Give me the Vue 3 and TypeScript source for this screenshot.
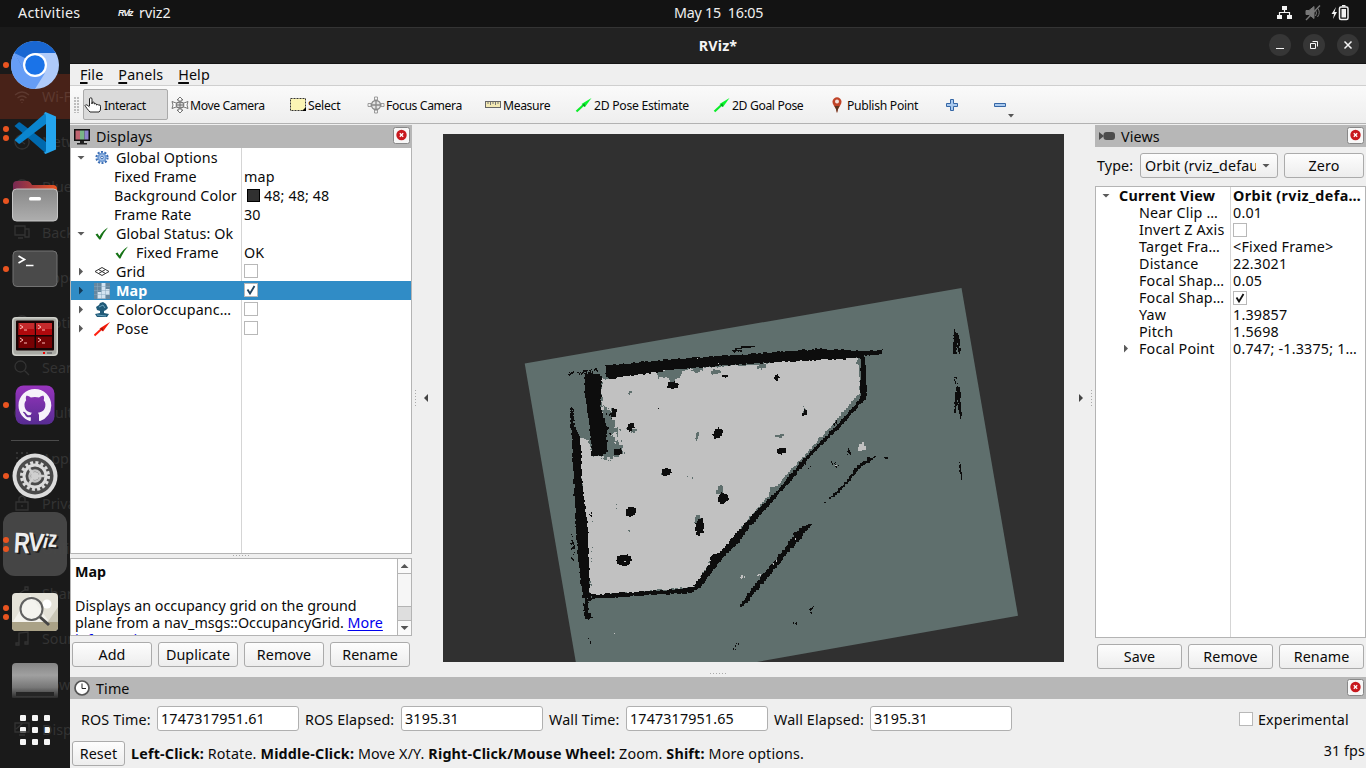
<script setup lang="ts">
type Pt = [number, number]

interface Row {
  name: string
  value?: string
  icon?: string
  arrow?: 'open' | 'closed'
  kind: 'top' | 'child' | 'state'
  check?: boolean
  swatch?: boolean
  selected?: boolean
}

const displays: Row[] = [
  { name: 'Global Options', icon: 'gear', arrow: 'open', kind: 'top' },
  { name: 'Fixed Frame', value: 'map', kind: 'child' },
  { name: 'Background Color', value: '48; 48; 48', swatch: true, kind: 'child' },
  { name: 'Frame Rate', value: '30', kind: 'child' },
  { name: 'Global Status: Ok', icon: 'ok', arrow: 'open', kind: 'top' },
  { name: 'Fixed Frame', value: 'OK', icon: 'ok', kind: 'state' },
  { name: 'Grid', icon: 'grid', arrow: 'closed', kind: 'top', check: false },
  { name: 'Map', icon: 'map', arrow: 'closed', kind: 'top', check: true, selected: true },
  { name: 'ColorOccupanc…', icon: 'tree', arrow: 'closed', kind: 'top', check: false },
  { name: 'Pose', icon: 'pose', arrow: 'closed', kind: 'top', check: false },
]

interface ViewRow { name: string; value?: string; check?: boolean; arrow?: 'open' | 'closed'; bold?: boolean }
const views: ViewRow[] = [
  { name: 'Current View', value: 'Orbit (rviz_defa…', arrow: 'open', bold: true },
  { name: 'Near Clip …', value: '0.01' },
  { name: 'Invert Z Axis', check: false },
  { name: 'Target Fra…', value: '<Fixed Frame>' },
  { name: 'Distance', value: '22.3021' },
  { name: 'Focal Shap…', value: '0.05' },
  { name: 'Focal Shap…', check: true },
  { name: 'Yaw', value: '1.39857' },
  { name: 'Pitch', value: '1.5698' },
  { name: 'Focal Point', value: '0.747; -1.3375; 1…', arrow: 'closed' },
]

const tools = [
  { id: 'interact', label: 'Interact' },
  { id: 'move', label: 'Move Camera' },
  { id: 'select', label: 'Select' },
  { id: 'focus', label: 'Focus Camera' },
  { id: 'measure', label: 'Measure' },
  { id: 'pose', label: '2D Pose Estimate' },
  { id: 'goal', label: '2D Goal Pose' },
  { id: 'point', label: 'Publish Point' },
]

const times = [
  { label: 'ROS Time:', value: '1747317951.61' },
  { label: 'ROS Elapsed:', value: '3195.31' },
  { label: 'Wall Time:', value: '1747317951.65' },
  { label: 'Wall Elapsed:', value: '3195.31' },
]

const ghosts = ['Wi-Fi', 'Network', 'Bluetooth', 'Background', 'Appearance', 'Notifications', 'Search', 'Multitasking',
  'Applications', 'Privacy', 'Online Accounts', 'Sharing', 'Sound', 'Power', 'Displays']

const dock = [
  { id: 'chromium', dots: 1 }, { id: 'code', dots: 2 }, { id: 'files', dots: 1 }, { id: 'terminal', dots: 1 },
  { id: 'terminator', dots: 0 }, { id: 'github', dots: 1 }, { id: 'settings', dots: 1 }, { id: 'rviz', dots: 2 },
  { id: 'viewer', dots: 2 }, { id: 'disk', dots: 0 },
]

// Occupancy grid outlines: edges are broken into small cell-sized steps with a seeded jitter.
let seed = 7
function rnd(): number {
  seed = (seed * 16807) % 2147483647
  return seed / 2147483647 - 0.5
}
function rough(pts: Pt[], amp = 1.6, step = 2): string {
  const out: string[] = []
  pts.forEach((p, i) => {
    const q = pts[(i + 1) % pts.length]
    const n = Math.max(1, Math.round(Math.hypot(q[0] - p[0], q[1] - p[1]) / step))
    for (let k = 0; k < n; k++) {
      const x = Math.round(p[0] + ((q[0] - p[0]) * k) / n + rnd() * amp)
      const y = Math.round(p[1] + ((q[1] - p[1]) * k) / n + rnd() * amp)
      out.push(out.length ? `H${x}V${y}` : `M${x} ${y}`)
    }
  })
  return out.join('') + 'Z'
}
function blob(cx: number, cy: number, rx: number, ry: number, amp = 2): string {
  const pts: Pt[] = []
  for (let a = 0; a < 10; a++) pts.push([cx + rx * Math.cos(a * 0.628), cy + ry * Math.sin(a * 0.628)])
  return rough(pts, amp)
}
function specks(x0: number, y0: number, x1: number, y1: number, n: number, spread: number): string {
  let d = ''
  for (let i = 0; i < n; i++) {
    const t = rnd() + 0.5
    const x = Math.round(x0 + (x1 - x0) * t + rnd() * spread)
    const y = Math.round(y0 + (y1 - y0) * t + rnd() * spread)
    d += `M${x} ${y}h${rnd() > 0 ? 2 : 1}v${rnd() > 0 ? 2 : 1}h-1z`
  }
  return d
}

const free = rough([[577, 438], [582, 438], [588, 441], [592, 456], [602, 456], [602, 378], [610, 378], [628, 374], [657, 371], [683, 369],
  [760, 364], [780, 361], [859, 357], [860, 394], [834, 423], [804, 457], [771, 493], [750, 517], [724, 552], [711, 563],
  [694, 587], [590, 596], [586, 527], [580, 460]])

const unknown = [
  rough([[602, 405], [609, 409], [614, 414], [613, 424], [618, 431], [613, 437], [621, 445], [622, 452], [614, 458], [605, 459], [601, 440]], 4),
  rough([[656, 371], [684, 368], [680, 377], [673, 385], [668, 377], [660, 378]], 3),
  specks(604, 407, 622, 452, 30, 10), specks(598, 456, 608, 460, 6, 3),
  blob(698, 369, 6, 3), blob(762, 366, 4, 3), blob(630, 393, 2, 1), blob(697, 436, 1.5, 4), blob(781, 436, 5, 1.5),
  blob(720, 490, 3, 5, 3), blob(697, 519, 3, 4), blob(773, 490, 3, 4), blob(716, 372, 6, 2.5), blob(804, 409, 1, 3),
  blob(634, 431, 3, 2), blob(606, 378, 3, 1), blob(858, 361, 2, 3), specks(859, 362, 859, 390, 14, 3), specks(691, 590, 711, 560, 9, 3),
  specks(590, 510, 590, 590, 8, 3), specks(656, 472, 700, 479, 3, 2), specks(608, 488, 640, 555, 3, 3), specks(609, 429, 645, 429, 4, 2),
].join('')

const walls = [
  rough([[605, 365], [650, 361], [700, 357], [780, 352], [787, 351], [820, 349], [862, 351], [883, 350], [882, 354], [865, 356],
    [862, 358], [800, 361], [750, 364], [677, 369], [653, 373], [627, 376], [610, 379], [606, 376]]),
  rough([[585, 373], [598, 373], [603, 378], [601, 383], [601, 407], [607, 430], [607, 452], [604, 456], [592, 456], [590, 427], [585, 393]]),
  rough([[572, 407], [574, 423], [581, 443], [582, 480], [588, 527], [589, 570], [590, 594], [592, 599], [583, 598], [578, 560],
    [574, 490], [572, 437], [570, 420]]),
  specks(571, 535, 573, 562, 22, 3), 'M732 350h3v-2h6v-2h14v1h-4v1h-9v1h-5v2h-5z', specks(733, 351, 744, 350, 8, 2), specks(568, 373, 574, 371, 8, 2),
  specks(578, 372, 596, 369, 28, 3), specks(571, 406, 573, 430, 16, 3), specks(846, 447, 849, 454, 8, 3),
  specks(733, 650, 737, 642, 5, 3), specks(809, 612, 812, 604, 6, 2), specks(793, 623, 799, 621, 4, 2),
  specks(588, 636, 590, 643, 3, 1), specks(804, 461, 808, 468, 5, 3), specks(833, 425, 837, 417, 5, 2),
  specks(884, 457, 894, 459, 3, 1), specks(954, 376, 956, 383, 6, 2), specks(608, 408, 607, 440, 12, 5),
  specks(589, 515, 592, 512, 3, 3), 'M658 408h1v1h-1z', specks(830, 459, 836, 466, 10, 4),
].join('')

const features = [
  rough([[590, 595], [647, 591], [683, 589], [693, 587], [698, 588], [692, 592], [647, 594], [592, 598]]),
  rough([[693, 586], [710, 563], [711, 554], [719, 553], [727, 543], [740, 528], [757, 510], [780, 487], [800, 462], [817, 444], [843, 418],
    [860, 398], [861, 358], [864, 356], [866, 395], [863, 400], [840, 426], [817, 448], [784, 487], [750, 525], [737, 543], [722, 557],
    [712, 570], [700, 587]], 1.2),
  rough([[592, 599], [585, 598], [586, 600]], 1),
].join('')

const marks = [
  blob(673, 385, 6, 4), blob(614, 412.5, 3, 4), blob(631.5, 427, 3.5, 4), blob(618, 452, 4.5, 4), blob(717.5, 433.5, 5, 5.5),
  blob(666, 472, 5, 4.5), blob(725, 376, 2.5, 2), blob(777, 377.5, 2.5, 3), blob(805, 413, 2.5, 3), blob(781.5, 451, 4.5, 4),
  blob(631, 512, 5.5, 5), blob(723, 498, 5.5, 5.5), blob(699.5, 527, 4.5, 9), blob(624, 560, 8, 6),
  rough([[823, 504], [832, 495], [843, 484], [856, 467], [868, 458], [876, 456], [870, 462], [860, 469], [850, 481], [838, 494], [828, 501]]),
  rough([[812, 524], [803, 526], [795, 533], [788, 545], [776, 559], [765, 573], [755, 584], [739, 608], [747, 602], [759, 586], [774, 570],
    [789, 550], [799, 540], [805, 531]]),
  rough([[954, 330], [958, 335], [960, 345], [960, 356], [958, 350], [957, 340], [956, 354], [953, 354]], 1.6),
  rough([[957, 386], [960, 388], [961, 402], [961, 420], [959, 408], [958, 400], [956, 412], [953, 417], [955, 400]], 1.6),
  rough([[959, 461], [961, 466], [962, 480], [960, 472]], 1),
  rough([[585, 598], [589, 600], [588, 612], [593, 618], [588, 620], [584, 614]], 1.6), specks(583, 602, 584, 616, 8, 1),
].join('')

const bright = [rough([[858, 451], [859, 444], [862, 442], [864, 446], [866, 450], [862, 451]], 1, 3), specks(740, 578, 743, 575, 6, 3), specks(757, 576, 759, 573, 4, 2),
  'M614 633h1v1h-1zM697 358h1v1h-1zM718 363h1v1h-1zM624 561h2v1h-2zM795 538h1v2h-1zM773 563h1v2h-1zM776 560h1v2h-1zM835 465h2v1h-2z',
  specks(610, 425, 618, 446, 9, 6),
].join('')
</script>

<template>
  <div class="screen">
    <header class="topbar">
      <span class="activities">Activities</span>
      <span class="mini-rviz">RViz</span>
      <span class="appname">rviz2</span>
      <span class="clock">May 15&nbsp; 16:05</span>
      <svg class="tray" width="76" height="18" viewBox="0 0 76 18">
        <path d="M5 2h5v4h-5zM0 11h5v4H0zM10 11h5v4h-5z" fill="#f2f2f2" />
        <path d="M7.5 6v3M2.500 11V8.500h10V11" fill="none" stroke="#f2f2f2" stroke-width="1.200" />
        <g stroke="#777" fill="none"><path d="M29 6.500h3l5-4v12l-5-4h-3z" fill="#777" /><path d="M38.500 6q2 3 0 6M40.500 4q3.500 4 0 9" /><path d="M29 16L43 1.500" stroke-width="1.400" /></g>
        <path d="M59 3l-4.500 7h2.500l-1 5 4-7h-2.500z" fill="#f2f2f2" />
        <rect x="62.500" y="3" width="8.500" height="12.500" rx="1.500" fill="none" stroke="#f2f2f2" stroke-width="1.500" />
        <path d="M64.500 5h4.500v8.500h-4.500zM65 1h3.500v1.500H65z" fill="#f2f2f2" />
      </svg>
    </header>

    <div class="body">
      <aside class="dock">
        <div class="ghosts">
          <div v-for="(g, i) in ghosts" :key="g" class="ghost" :class="{ hot: i === 0 }">
            <svg width="16" height="16" viewBox="0 0 16 16" fill="none" stroke="currentColor" stroke-width="1.300">
              <path v-if="i === 0" d="M1 6q7-6 14 0M3.500 9q4.500-4 9 0M6 11.500q2-2 4 0M8 13v1" />
              <path v-else-if="i === 3" d="M1 2h10v9H1zM11 5h4v8h-4zM4 14h5" />
              <path v-else-if="i === 6" d="M10.500 10.500L15 15M12 6.500a5.500 5.500 0 1 1-11 0a5.500 5.500 0 0 1 11 0" />
              <path v-else-if="i === 8" d="M2 3h2M7 3h2M12 3h2M2 8h2M7 8h2M12 8h2M2 13h2M7 13h2M12 13h2" stroke-width="2" />
              <path v-else-if="i === 9" d="M2 7h12v8H2zM5 7V3q3-4 6 0v4M8 10v2" />
              <path v-else-if="i === 11" d="M3 9l9-6M3 9l8 4M1 8h3v3H1zM11 1h3v3h-3zM11 11h3v3h-3z" />
              <path v-else-if="i === 12" d="M5 13V2l9-1v11M2 12h3v2H2zM11 11h3v2h-3z" />
              <path v-else-if="i === 14" d="M1 2h14v9H1zM5 14h6M2 8l7-6" />
              <path v-else d="M8 1a7 7 0 1 0 .1 0M8 4v4l3 2" />
            </svg>
            <span>{{ g }}</span>
          </div>
        </div>

        <div v-for="d in dock" :key="d.id" class="slot" :class="[d.id, { active: d.id === 'rviz' }]">
          <span class="dots"><i v-for="n in d.dots" :key="n"></i></span>
          <svg v-if="d.id === 'chromium'" width="48" height="48" viewBox="0 0 48 48">
            <circle cx="24" cy="24" r="24" fill="#afcbfa" />
            <path d="M24 48A24 24 0 0 1 3 12.500L14 30l10 6 10-4-10 16z" fill="#669df6" /><path d="M3.200 12A24 24 0 0 1 44.800 12H24L13.600 30z" fill="#1967d2" />
            <path d="M3.200 12L13.600 30 14 17z" fill="#669df6" />
            <circle cx="24" cy="24" r="12" fill="#fff" /><circle cx="24" cy="24" r="9.800" fill="#1a73e8" />
          </svg>
          <svg v-else-if="d.id === 'code'" width="44" height="44" viewBox="0 0 44 44">
            <path d="M1.500 15l4-3.500q.8-.5 1.600 0L33 31v11.500z" fill="#0069ae" /><path d="M1.500 29l4 3.500q.8.500 1.600 0L33 13V1.500z" fill="#0a85cf" />
            <path d="M32.500 1L43 5.500v33L32.500 43l-2-1.500q2.500.5 2.500-2.500V5q0-3-2.500-2.500z" fill="#24a5ee" />
          </svg>
          <svg v-else-if="d.id === 'files'" width="46" height="42" viewBox="0 0 46 42">
            <defs><linearGradient id="fo"><stop stop-color="#772953" /><stop offset="1" stop-color="#e95420" /></linearGradient><linearGradient id="fg" x2="0" y2="1"><stop stop-color="#888" /><stop offset="1" stop-color="#aeaeae" /></linearGradient></defs>
            <path d="M1 5q0-4 4-4h10q3 0 5 4h21q4 0 4 4v13H1z" fill="url(#fo)" /><rect x=".500" y="9" width="45" height="32" rx="4" fill="url(#fg)" stroke="#c5c5c5" />
            <rect x="17" y="17" width="12" height="3.500" rx="1.500" fill="#fff" />
          </svg>
          <svg v-else-if="d.id === 'terminal'" width="46" height="38" viewBox="0 0 46 38">
            <rect x="1" y="1" width="44" height="35.500" rx="4" fill="#4a4a4a" stroke="#737373" /><path d="M6.500 6l6 3.500-6 3.500M14 15.500h7.500" fill="none" stroke="#fff" stroke-width="1.700" />
          </svg>
          <svg v-else-if="d.id === 'terminator'" width="46" height="40" viewBox="0 0 46 40">
            <rect width="46" height="39" rx="4" fill="#cfd0ca" /><rect x="1.500" y="1.500" width="43" height="36" rx="3" fill="#a9aaa4" /><rect x="4" y="3.500" width="38" height="30" rx="1" fill="#190405" />
            <path d="M6.500 6h16v12h-16zM24 6h16v12H24z" fill="#c42a2c" /><path d="M6.500 12h16v6h-16zM24 12h16v6H24z" fill="#b0080c" /><path d="M6.500 19.500h16V31h-16zM24 19.500h16V31H24z" fill="#760204" />
            <path d="M8 8l3 2-3 2M12 13h3M26 8l3 2-3 2M30 13h3M8 21l3 2-3 2M12 26h3M26 21l3 2-3 2M30 26h3" fill="none" stroke="#ffb9b4" /><path d="M31 35h2v2h-2z" fill="#e00" /><path d="M35 35h5v2h-5z" fill="#777" />
          </svg>
          <svg v-else-if="d.id === 'github'" width="40" height="40" viewBox="0 0 40 40">
            <defs><linearGradient id="gh" x2="0" y2="1"><stop stop-color="#9734bd" /><stop offset="1" stop-color="#572c92" /></linearGradient></defs>
            <rect x=".500" y=".500" width="39" height="39" rx="8" fill="url(#gh)" />
            <path transform="translate(3.500 4) scale(2.050)" fill="#f6f2fa" d="M8 0C3.580 0 0 3.580 0 8c0 3.540 2.290 6.530 5.470 7.590.4.070.55-.17.55-.38 0-.19-.01-.82-.01-1.490-2.010.37-2.530-.49-2.690-.94-.09-.23-.48-.94-.82-1.130-.28-.15-.68-.52-.01-.53.63-.01 1.080.58 1.230.82.72 1.210 1.870.87 2.330.66.070-.52.28-.87.51-1.070-1.780-.2-3.640-.89-3.640-3.950 0-.87.31-1.590.82-2.150-.08-.2-.36-1.020.08-2.120 0 0 .67-.21 2.200.82.64-.18 1.320-.27 2-.27s1.360.09 2 .27c1.530-1.040 2.200-.82 2.200-.82.44 1.100.16 1.920.08 2.120.51.56.82 1.270.82 2.150 0 3.070-1.870 3.750-3.650 3.950.29.25.54.73.54 1.480 0 1.070-.01 1.930-.01 2.200 0 .21.15.46.55.38A8.010 8.010 0 0 0 16 8c0-4.420-3.580-8-8-8Z" />
          </svg>
          <svg v-else-if="d.id === 'settings'" width="46" height="46" viewBox="0 0 46 46">
            <circle cx="23" cy="23" r="22.500" fill="#dcdcdc" /><circle cx="23" cy="23" r="18.500" fill="#4a4a4a" />
            <circle cx="23" cy="23" r="13.500" fill="none" stroke="#dcdcdc" stroke-width="3" stroke-dasharray="3 2.302" />
            <circle cx="23" cy="23" r="11" fill="none" stroke="#dcdcdc" stroke-width="3" /><circle cx="23" cy="23" r="5.500" fill="none" stroke="#c4c4c4" stroke-width="2.500" />
            <circle cx="23" cy="23" r="4" fill="#cfcfcf" /><path d="M24 23h9M22 23l-5-8M22 23l-5 8" stroke="#cfcfcf" stroke-width="2.500" />
          </svg>
          <svg v-else-if="d.id === 'rviz'" class="logo" width="48" height="34" viewBox="0 0 48 34">
            <g v-for="n in 2" :key="n" :transform="n === 1 ? 'translate(2 1.500)' : undefined" :fill="n === 1 ? '#1c1c1c' : '#ededed'" font-family="'Liberation Sans', sans-serif" font-weight="700">
              <text x="1" y="26" font-size="29" textLength="16" lengthAdjust="spacingAndGlyphs" transform="rotate(3 8 16)">R</text>
              <text x="15" y="24" font-size="26" textLength="16" lengthAdjust="spacingAndGlyphs" transform="rotate(6 22 16)">V</text>
              <text x="30" y="21" font-size="20" textLength="5" lengthAdjust="spacingAndGlyphs" transform="rotate(14 32 16)">i</text>
              <text x="35" y="20" font-size="24" textLength="9" lengthAdjust="spacingAndGlyphs" transform="rotate(4 38 16)">z</text>
            </g>
          </svg>
          <svg v-else-if="d.id === 'viewer'" width="46" height="38" viewBox="0 0 46 38">
            <rect width="46" height="38" rx="4" fill="#e4e2d8" /><path d="M0 30l18-28 20 28z" fill="#f3f2ec" /><path d="M35 30L46 14v16z" fill="#c9c6b6" /><path d="M0 29h46v5q0 4-4 4H4q-4 0-4-4z" fill="#aaa287" />
            <circle cx="35" cy="11" r="4.500" fill="#fff" /><circle cx="19.500" cy="16" r="11" fill="#f4f4f0" fill-opacity=".7" stroke="#606060" stroke-width="2" /><path d="M28 24l9 8" stroke="#454545" stroke-width="3" />
          </svg>
          <div v-else class="drive"><i></i></div>
        </div>
        <div class="apps"><i v-for="n in 9" :key="n"></i></div>
      </aside>

      <main class="window">
        <div class="titlebar">
          <b>RViz*</b>
          <div class="winbtns">
            <span v-for="n in 3" :key="n"><svg width="12" height="12" viewBox="0 0 12 12" fill="none" stroke="#f4f4f4"><path v-if="n === 1" d="M2 9.500h8" /><path v-else-if="n === 2" d="M2.500 4.500h5v5h-5zM4.500 2.500h5v5" /><path v-else d="M2.500 2.500l7 7M9.500 2.500l-7 7" stroke-width="1.500" /></svg></span>
          </div>
        </div>
        <nav class="menubar"><span><u>F</u>ile</span><span><u>P</u>anels</span><span><u>H</u>elp</span></nav>

        <div class="toolbar">
          <span class="grip"></span>
          <button v-for="t in tools" :key="t.id" class="tool" :class="t.id">
            <svg width="18" height="18" viewBox="0 0 18 18">
              <path v-if="t.id === 'interact'" d="M5.500 10V2.500q1.500-1.500 2.500 0V8V6.500q1.300-1 2.200 0V8q1.300-1 2.200 0v1q1.300-1 2.300 0q1.800-.5 1.800 1.200V13q0 2-1.500 3H6q-1.500-1.500-3-3.500T1 9.500q1-2 4.500 1.500" fill="#fff" stroke="#222" />
              <g v-else-if="t.id === 'move'" fill="#fff" stroke="#666" stroke-width=".9"><path d="M9 1l3 3h-2v3h-2V4H6zM9 17l3-3h-2v-3h-2v3H6zM1 5.500l4 1.500h8l4-1.500-1 3.500 1 3.500-4-1.500H5l-4 1.500 1-3.500z" /><ellipse cx="9" cy="9" rx="4" ry="3" fill="#ddd" /><path d="M5 9h8M9 5v8" /></g>
              <g v-else-if="t.id === 'select'"><rect x="1.500" y="2.500" width="15" height="12" fill="#fcf5b4" stroke="#333" stroke-dasharray="2 1" /><path d="M17 11v4h-4z" /></g>
              <g v-else-if="t.id === 'focus'" fill="none" stroke="#888"><path d="M7.500 1h3v3h-3zM7.500 14h3v3h-3zM1 7.500h3v3H1zM14 7.500h3v3h-3z" stroke-width=".8" /><circle cx="9" cy="9" r="4.500" fill="#e4e4e4" stroke-width="1.300" /><path d="M9 4v10M4 9h10" stroke-width="1.300" /></g>
              <g v-else-if="t.id === 'measure'"><rect x="1.500" y="5.500" width="15" height="6" fill="#f3e9b4" stroke="#666" /><path d="M4 6v2M6.500 6v3M9 6v2M11.500 6v3M14 6v2" stroke="#777" /></g>
              <g v-else-if="t.id === 'pose' || t.id === 'goal'"><path d="M1.500 15.500l7-6.500" stroke="#0cec2a" stroke-width="2.200" /><path d="M16.500 2L6.500 8l3.500 3z" fill="#08f52b" /><path d="M9.500 7.500l.5 3.500-2.500-2z" fill="#088b20" /></g>
              <g v-else><path d="M9 17Q8 12 5.800 9.500Q3 5 6 2.500Q9 0 12 2.500Q15 5 12.200 9.500Q10 12 9 17z" fill="#c04428" /><path d="M9 17Q8 12 6.500 10h5Q10 12 9 17z" fill="#5a3520" /><circle cx="9" cy="5.500" r="2" fill="#f3e2dc" /></g>
            </svg>
            <span>{{ t.label }}</span>
          </button>
          <svg class="plusminus" width="76" height="30" viewBox="0 0 76 30">
            <path d="M7.500 9.500h3v4h4v3h-4v4h-3v-4h-4v-3h4z" fill="#a9c9ee" stroke="#3566a5" /><path d="M51.500 13.500h11v3h-11z" fill="#a9c9ee" stroke="#3566a5" />
            <path d="M65 24h6l-3 3.500z" fill="#555" />
          </svg>
        </div>

        <div class="content">
          <section class="left">
            <div class="dockhead">
              <svg width="18" height="18" viewBox="0 0 18 18"><path d="M1 1h16v12H1z" fill="#111" /><path d="M2.500 2.500h4.500v9H2.500z" fill="#c06470" /><path d="M7 2.500h4.500v9H7z" fill="#79b487" /><path d="M11.500 2.500h4v9h-4z" fill="#8d83cc" /><path d="M7 13h4v2h3v1.500H4V15h3z" fill="#222" /></svg>
              <span>Displays</span>
              <svg class="close" width="17" height="17" viewBox="0 0 17 17"><rect x=".500" y=".500" width="16" height="16" rx="2" fill="#f7f7f7" stroke="#888" /><circle cx="8.500" cy="8" r="5.200" fill="#c8181e" /><path d="M6.800 6.300l3.400 3.400M10.200 6.300L6.800 9.700" stroke="#fff" stroke-width="1.300" /></svg>
            </div>
            <div class="tree">
              <div v-for="(r, i) in displays" :key="i" class="row" :class="[r.kind, { selected: r.selected }]">
                <div class="cell name">
                  <span class="twisty" :class="r.arrow"></span>
                  <svg v-if="r.icon" class="ricon" width="16" height="16" viewBox="0 0 16 16">
                    <g v-if="r.icon === 'gear'" fill="none" stroke="#3c6eb4"><circle cx="8" cy="7.500" r="5.500" stroke-width="2.200" stroke-dasharray="2 1.460" /><circle cx="8" cy="7.500" r="3.800" fill="#a9c5ea" stroke="#6f9bd4" stroke-width="1.800" /><circle cx="8" cy="7.500" r="1.300" fill="#fff" /></g>
                    <path v-else-if="r.icon === 'ok'" d="M1.500 8.500l2-1 2 3Q8.500 4.500 14 1.500Q9.500 6.500 6.500 13.500H5.300z" fill="#167316" />
                    <path v-else-if="r.icon === 'grid'" d="M1 7.500l7-4 7 4-7 4zM4.500 5.500l7 4M11.500 5.500l-7 4" fill="none" stroke="#333" />
                    <g v-else-if="r.icon === 'map'"><rect width="16" height="16" fill="#66879f" /><path d="M7.500 0h4v6h4v6h-4v3.500h-8V9h4z" fill="#d3e3f1" /><path d="M0 3.500h16M0 7.500h16M0 11.500h16M3.500 0v16M7.500 0v16M11.500 0v16" stroke="#8aa9be" stroke-width=".5" /></g>
                    <g v-else-if="r.icon === 'tree'" fill="#205a78"><path d="M6 1l3-1 3 2 2 4-2 2-2 1v2l5 1-2 3H3l-2-3 5-1V9L3 8 2 5l3-2z" /><path d="M5 5l4-2 2 3M3 13l9 1" stroke="#6ba5c0" fill="none" /></g>
                    <g v-else><path d="M.5 14.500l7-6.500" stroke="#f21" stroke-width="2" /><path d="M16 1L5.500 7.500 9 10.500z" fill="#f21a0a" /><path d="M8.500 6.500l.5 3.500-2.500-2z" fill="#8e1810" /></g>
                  </svg>
                  <span>{{ r.name }}</span>
                </div>
                <div class="cell val"><i v-if="r.swatch" class="swatch"></i><i v-if="r.check !== undefined" class="box"><svg v-if="r.check" width="12" height="12" viewBox="0 0 12 12"><path d="M2.500 5.500l2.500 4L9.500 2" fill="none" stroke="#22425c" stroke-width="1.800" /></svg></i>{{ r.value }}</div>
              </div>
              <div class="filler"></div>
            </div>
            <div class="hsplit"><i class="hdots"></i></div>
            <div class="desc">
              <div class="desctext"><b>Map</b><br /><br />Displays an occupancy grid on the ground<br />plane from a nav_msgs::OccupancyGrid. <a>More</a><br /><a>information</a>.</div>
              <div class="scroll"><i class="up"></i><i class="thumb"></i><i class="groove"></i><i class="down"></i></div>
            </div>
            <div class="buttons"><button>Add</button><button>Duplicate</button><button>Remove</button><button>Rename</button></div>
          </section>

          <section class="center">
            <div class="handle"><i class="vdots"></i><i class="tri l"></i></div>
            <svg class="map" width="621" height="528" viewBox="443 134 621 528" shape-rendering="crispEdges">
              <path fill="#303030" d="M443 134h621v528H443z" />
              <path fill="#5f6f6d" shape-rendering="auto" d="M524.700 363.400L961.500 288 1018 615.700 757 662 575.800 662z" />
              <path fill="#c1c1c1" :d="free" /><path fill="#5f6f6d" :d="unknown" /><path fill="#0d0d0d" :d="walls" />
              <path fill="#0d0d0d" stroke="#0d0d0d" stroke-width="1" :d="features" /><path fill="#0d0d0d" :d="marks" /><path fill="#c1c1c1" :d="bright" />
            </svg>
            <div class="handle right-handle"><i class="tri r"></i><i class="vdots"></i></div>
          </section>

          <section class="right">
            <div class="dockhead"><svg width="18" height="18" viewBox="0 0 18 18"><path d="M1 5l5 4-5 4z" fill="#4b4b4b" /><rect x="5.500" y="5" width="11.500" height="8" rx="3" fill="#4b4b4b" /></svg><span>Views</span>
              <svg class="close" width="17" height="17" viewBox="0 0 17 17"><rect x=".500" y=".500" width="16" height="16" rx="2" fill="#f7f7f7" stroke="#888" /><circle cx="8.500" cy="8" r="5.200" fill="#c8181e" /><path d="M6.800 6.300l3.400 3.400M10.200 6.300L6.800 9.700" stroke="#fff" stroke-width="1.300" /></svg>
            </div>
            <div class="typerow"><span>Type:</span><div class="combo"><span>Orbit (rviz_default)</span><i></i></div><button>Zero</button></div>
            <div class="vtree">
              <div v-for="(v, i) in views" :key="i" class="vrow" :class="{ bold: v.bold }">
                <div class="vname"><span class="twisty" :class="v.arrow"></span><span>{{ v.name }}</span></div>
                <div class="vval"><i v-if="v.check !== undefined" class="box"><svg v-if="v.check" width="12" height="12" viewBox="0 0 12 12"><path d="M2.500 5.500l2.500 4L9.500 2" fill="none" stroke="#111" stroke-width="1.800" /></svg></i>{{ v.value }}</div>
              </div>
              <div class="filler"></div>
            </div>
            <div class="buttons"><button>Save</button><button>Remove</button><button>Rename</button></div>
          </section>
        </div>

        <div class="bottomsplit"><i class="hdots"></i></div>
        <section class="time">
          <div class="dockhead"><svg width="18" height="18" viewBox="0 0 18 18"><circle cx="9" cy="9" r="7" fill="#fff" stroke="#555" stroke-width="1.700" /><path d="M9 4.500V9.500h4" fill="none" stroke="#222" /></svg><span>Time</span>
            <svg class="close" width="17" height="17" viewBox="0 0 17 17"><rect x=".500" y=".500" width="16" height="16" rx="2" fill="#f7f7f7" stroke="#888" /><circle cx="8.500" cy="8" r="5.200" fill="#c8181e" /><path d="M6.800 6.300l3.400 3.400M10.200 6.300L6.800 9.700" stroke="#fff" stroke-width="1.300" /></svg>
          </div>
          <div class="timerow">
            <template v-for="t in times" :key="t.label"><label>{{ t.label }}</label><div class="field">{{ t.value }}</div></template>
            <i class="box"></i><span class="exp">Experimental</span>
          </div>
          <div class="statusbar">
            <button>Reset</button>
            <span class="hint"><b>Left-Click:</b> Rotate. <b>Middle-Click:</b> Move X/Y. <b>Right-Click/Mouse Wheel:</b> Zoom. <b>Shift:</b> More options.</span>
            <span class="fps">31 fps</span>
          </div>
        </section>
      </main>
    </div>
  </div>
</template>

<style>
body { margin: 0; overflow: hidden; }
</style>

<style scoped>
* { box-sizing: border-box; }
.screen { width: 1366px; height: 768px; display: flex; flex-direction: column; overflow: hidden; font: 14.3px/19px "Noto Sans", sans-serif; color: #0a0a0a; background: #efefef; white-space: nowrap; }
i { font-style: normal; display: block; }
svg { display: block; flex: none; }
button { font: inherit; color: inherit; letter-spacing: inherit; padding: 0; }

.topbar { height: 27px; flex: none; background: #131313; color: #f0f0f0; display: grid; grid-template-columns: 118px 21px 554px 460px 131px 82px; align-items: center; line-height: 17px; padding-bottom: 2px; }
.activities { padding-left: 18px; letter-spacing: .28px; }
.mini-rviz { font: italic 700 9px/12px "Liberation Sans", sans-serif; letter-spacing: -1.200px; }
.clock { margin-left: -19px; letter-spacing: -.25px; }
.tray { grid-column: 6; margin-left: -7px; }

.body { flex: 1; display: flex; min-height: 0; }
.dock { width: 70px; flex: none; background: #1a1a1a; position: relative; overflow: hidden; padding-top: 4px; display: flex; flex-direction: column; }
.ghosts { position: absolute; inset: 47px 0 0 0; }
.ghost { height: 45.200px; display: flex; align-items: center; gap: 12px; padding-left: 14px; color: #333; }
.ghost.hot { background: #482218; color: #5d392f; }
.slot { position: relative; height: 68px; flex: none; display: flex; align-items: center; justify-content: center; }
.slot.files { padding-bottom: 1px; }
.slot.github { margin-bottom: 3px; }
.slot.github::after { content: ""; position: absolute; left: 11px; right: 11px; bottom: -2px; height: 1px; background: #4b4b4b; }
.slot.active::before { content: ""; position: absolute; left: 3px; top: 2px; width: 64px; height: 64px; border-radius: 12px; background: #484848; opacity: .95; }
.logo { position: relative; margin-left: 4px; }
.dots { position: absolute; left: 3px; top: 0; height: 100%; display: flex; flex-direction: column; justify-content: center; gap: 3px; }
.dots i { width: 6px; height: 6px; border-radius: 3px; background: #e95420; }
.drive { width: 46px; height: 35px; border-radius: 4px 4px 1px 1px; background: linear-gradient(#858585, #a0a0a0 35%, #777 70%, #444 90%, #2c2c2c); display: flex; align-items: flex-end; padding: 0 4px 2px; }
.drive i { width: 38px; height: 4px; background: #252525; }
.apps { align-self: center; margin-top: 1px; display: grid; grid-template-columns: repeat(3, 6px); gap: 6px; }
.apps i { width: 6px; height: 6px; border-radius: 1px; background: #f4f4f4; }

.window { flex: 1; min-width: 0; display: flex; flex-direction: column; letter-spacing: .12px; }
.titlebar { height: 37px; flex: none; background: #222; border-top: 1px solid #343434; border-bottom: 1px solid #151515; color: #f4f4f4; display: flex; align-items: center; justify-content: center; position: relative; }
.winbtns { position: absolute; right: 7px; top: 6px; display: flex; gap: 12px; }
.winbtns span { width: 22px; height: 22px; border-radius: 50%; background: #363636; display: grid; place-items: center; }
.menubar { height: 22px; flex: none; padding: 1px 0 0 10px; border-bottom: 1px solid #cfcfcf; display: flex; gap: 15px; }
.menubar u { text-underline-offset: 2px; text-decoration-thickness: 1.500px; }
.toolbar { height: 38px; flex: none; display: flex; align-items: center; background: linear-gradient(#fafafa, #eee); border-bottom: 1px solid #b2b2b2; font-size: 12.200px; letter-spacing: -.38px; }
.grip { width: 6px; height: 16px; margin: 0 3px 0 4px; background: radial-gradient(circle at 1px 1px, #aaa .6px, transparent 1px) 0 0 / 3px 3px; }
.tool { height: 31px; border: 1px solid transparent; background: none; display: flex; align-items: center; gap: 1px; padding-left: 2px; border-radius: 2px; }
.tool > span { padding-top: 2px; }
.tool.interact { width: 85px; border-color: #aaa; background: #dadada; padding-left: 1px; }
.tool.interact svg { margin-left: -1px; margin-right: 1px; }
.tool.move { width: 118px; } .tool.select { width: 78px; letter-spacing: -.25px; } .tool.focus { width: 117px; } .tool.measure { width: 92px; }
.tool.pose { width: 138px; padding-left: 1px; letter-spacing: -.28px; } .tool.goal { width: 115px; padding-left: 1px; } .tool.point { width: 117px; padding-left: 1px; letter-spacing: -.3px; }

.content { height: 548px; flex: none; display: flex; padding-top: 1px; }
.dockhead { height: 22px; flex: none; background: #b7b7b7; display: flex; align-items: center; gap: 5px; padding: 0 2px 0 3px; }
.left .dockhead { height: 23px; }
.close { margin-left: auto; margin-top: -2px; }
.left { width: 342px; flex: none; display: flex; flex-direction: column; }
.tree { height: 406px; flex: none; background: #fff; border: 1px solid #b4b4b4; border-top: 0; display: flex; flex-direction: column; }
.row { height: 19px; flex: none; display: grid; grid-template-columns: 171px 1fr; }
.cell { display: flex; align-items: center; }
.name { border-right: 1px solid #d5d5d5; overflow: hidden; }
.val { padding-left: 2px; }
.row .twisty { margin: 0 11px 0 6px; width: 8px; }
.top .ricon { margin-right: 6px; margin-left: -2px; }
.child .twisty { margin-right: 29px; }
.state .twisty { margin-right: 29px; }
.state .ricon { margin-right: 6px; }
.name .twisty { flex: none; }
.twisty.open::before { content: ""; display: block; width: 8px; height: 4px; background: #5a5a5a; clip-path: polygon(0 0, 100% 0, 50% 100%); }
.twisty.closed::before { content: ""; display: block; width: 4px; height: 8px; background: #5a5a5a; clip-path: polygon(0 0, 100% 50%, 0 100%); }
.row .twisty.closed::before { margin-left: 2px; }
.selected { background: #308cc6; color: #fff; font-weight: 700; }
.selected .name { border-color: #308cc6; }
.selected .twisty.closed::before { background: #123a58; }
.filler { flex: 1; width: 171px; border-right: 1px solid #d5d5d5; }
.swatch { width: 13px; height: 13px; background: #303030; border: 1px solid #000; margin: 0 4px 0 3px; }
.box { width: 14px; height: 14px; flex: none; border: 1px solid #b8b8b8; background: #fff; }
.cell .box { margin-top: -1px; }
.hsplit { height: 4px; flex: none; display: flex; justify-content: center; align-items: flex-start; padding-top: 1px; }
.hdots { width: 17px; height: 1px; background: repeating-linear-gradient(90deg, #aaa 0 1px, transparent 1px 3px); }
.desc { height: 78px; flex: none; border: 1px solid #b4b4b4; background: #fff; display: flex; overflow: hidden; line-height: 17px; letter-spacing: -.01px; }
.desctext { flex: 1; padding: 4px 0 0 4px; }
.desctext a { color: #00e; text-decoration: underline; text-underline-offset: 2px; }
.scroll { width: 14px; border-left: 1px solid #b4b4b4; display: flex; flex-direction: column; }
.scroll .up, .scroll .down { height: 14px; background: #fafafa; display: grid; place-items: center; }
.up::before, .down::before { content: ""; width: 8px; height: 4px; background: #555; clip-path: polygon(50% 0, 100% 100%, 0 100%); }
.down::before { clip-path: polygon(0 0, 100% 0, 50% 100%); }
.thumb { height: 34px; border-top: 1px solid #b4b4b4; border-bottom: 1px solid #b4b4b4; background: #f6f6f6; }
.groove { flex: 1; background: #dedede; border-bottom: 1px solid #b4b4b4; }
.buttons { display: flex; gap: 6px; padding: 6px 2px 0; letter-spacing: .05px; }
.buttons button, .typerow button, .statusbar button { flex: 1; height: 25px; border: 1px solid #ababab; border-radius: 3px; background: linear-gradient(#fdfdfd, #ededed); line-height: 22px; }

.center { flex: 1; display: flex; padding-top: 9px; }
.handle { width: 31px; height: 528px; flex: none; display: flex; align-items: center; gap: 8px; padding-left: 3px; }
.right-handle { padding: 0 0 0 15px; }
.vdots { width: 1px; height: 17px; background: repeating-linear-gradient(#aaa 0 1px, transparent 1px 3px); }
.tri { width: 4px; height: 8px; background: #444; }
.tri.l { clip-path: polygon(100% 0, 100% 100%, 0 50%); }
.tri.r { clip-path: polygon(0 0, 100% 50%, 0 100%); }

.right { width: 271px; flex: none; display: flex; flex-direction: column; }
.typerow { height: 39px; flex: none; display: flex; align-items: flex-start; padding: 6px 2px 0; line-height: 25px; }
.typerow > span { width: 43px; flex: none; }
.combo { width: 138px; height: 25px; flex: none; margin-right: 6px; padding: 0 7px 0 4px; border: 1px solid #ababab; border-radius: 3px; background: linear-gradient(#fdfdfd, #ededed); display: flex; align-items: center; justify-content: space-between; line-height: 23px; }
.combo span { width: 111px; overflow: hidden; }
.combo i { width: 8px; height: 4px; background: #555; clip-path: polygon(0 0, 100% 0, 50% 100%); }
.vtree { height: 452px; flex: none; border: 1px solid #b4b4b4; background: #fff; display: flex; flex-direction: column; }
.vtree .filler { width: 135px; }
.vrow { height: 17px; flex: none; display: grid; grid-template-columns: 135px 1fr; line-height: 17px; letter-spacing: .2px; }
.vname { display: flex; align-items: center; border-right: 1px solid #d5d5d5; }
.vname .twisty { width: 7px; flex: none; margin: 0 8px 0 28px; }
.bold .vname .twisty { width: 8px; margin: 0 9px 0 6px; }
.bold { font-weight: 700; letter-spacing: .3px; }
.bold .vval { letter-spacing: .4px; }
.vval { display: flex; align-items: center; padding-left: 2px; }

.bottomsplit { height: 5px; flex: none; display: flex; justify-content: center; align-items: flex-start; padding-top: 1px; }
.time { flex: 1; display: flex; flex-direction: column; }
.timerow { height: 40px; display: flex; align-items: center; padding-left: 11px; flex: none; letter-spacing: .14px; }
.timerow label { width: 76px; flex: none; }
.timerow label:nth-of-type(2n) { width: 96px; }
.timerow label:nth-of-type(3) { width: 77px; }
.field { width: 142px; height: 25px; flex: none; border: 1px solid #b0b0b0; border-radius: 3px; background: #fff; padding-left: 3px; line-height: 23px; margin: -1px 6px 0 0; }
.timerow .box { margin-left: 221px; margin-right: 5px; }
.statusbar { display: flex; padding: 2px 1px 0 2px; line-height: 25px; }
.statusbar button { flex: none; width: 53px; height: 25px; }
.hint { margin-left: 6px; letter-spacing: .15px; }
.hint b { letter-spacing: .19px; }
.fps { margin-left: auto; line-height: 19px; }
</style>
